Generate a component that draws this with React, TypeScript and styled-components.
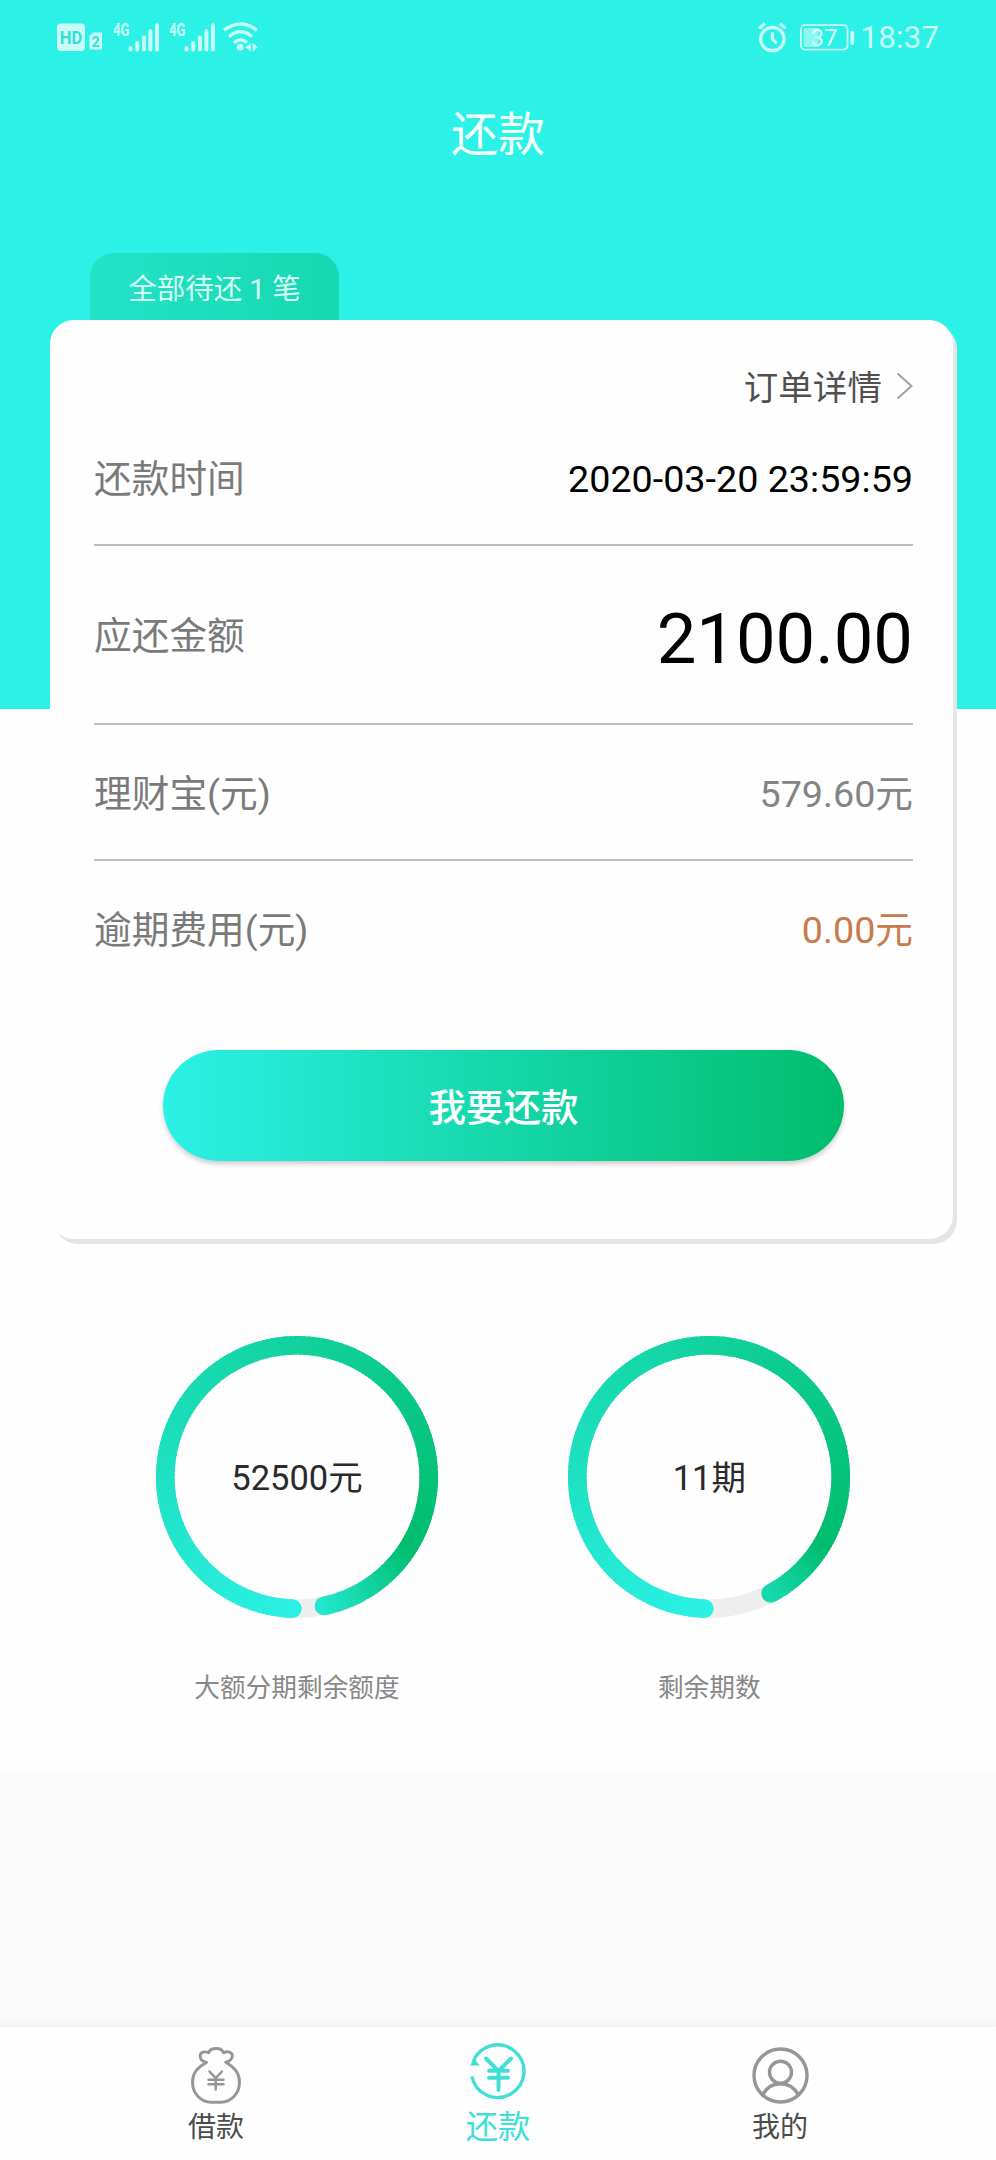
import React from "react";
import styled, { createGlobalStyle } from "styled-components";

const CYAN = "#2bf1e6";
const STATUS = "#c9fcf8";

const GlobalStyle = createGlobalStyle`
  * { box-sizing: border-box; }
  body {
    margin: 0;
    background: #fafafa;
    font-family: Roboto, "Noto Sans CJK SC", sans-serif;
  }
`;

const Page = styled.div`
  display: flex;
  flex-direction: column;
  width: 996px;
  height: 2160px;
  background: #fafafa;
`;

const Main = styled.main`
  height: 1773px;
  background: linear-gradient(${CYAN} 0 709px, #fefefe 709px);
`;

const StatusBar = styled.div`
  display: flex;
  justify-content: space-between;
  align-items: center;
  height: 74px;
  padding: 0 57px;
  color: ${STATUS};
`;

const StatusGroup = styled.div`
  display: flex;
  align-items: center;
  svg { display: block; overflow: visible; }
`;

const StatusItem = styled.span<{ $gap: number }>`
  margin-left: ${(p) => p.$gap}px;
`;

const Clock = styled.span`
  margin-left: 6px;
  font-size: 31.5px;
  line-height: 40px;
  padding-top: 2px;
`;

const TitleBar = styled.h1`
  display: flex;
  justify-content: center;
  align-items: center;
  height: 120px;
  margin: 0;
  color: #f2fffe;
  font-size: 47px;
  font-weight: 400;
  line-height: 60px;
  padding-top: 2px;
`;

const PendingTab = styled.div`
  display: flex;
  justify-content: center;
  align-items: center;
  width: 249px;
  height: 67px;
  margin: 59px 0 0 90px;
  border-radius: 24px 24px 0 0;
  background: linear-gradient(90deg, #24e2c8, #17d8b0);
  color: #d8fff6;
  font-size: 28.5px;
  line-height: 36px;
  padding-top: 6px;
`;

const Card = styled.section`
  height: 919px;
  width: 903px;
  margin-left: 50px;
  padding: 48px 40px 0 44px;
  border-radius: 24px;
  background: #fefefe;
  box-shadow: 4px 5px 0 #e5e5e5;
`;

const OrderLink = styled.div`
  display: flex;
  justify-content: flex-end;
  align-items: center;
  gap: 14px;
  height: 40px;
  margin-bottom: 3px;
  color: #505050;
  font-size: 34.6px;
  line-height: 40px;
  svg { margin-top: -4px; }
`;

const Row = styled.div<{ $height: number; $last?: boolean }>`
  display: flex;
  justify-content: space-between;
  align-items: center;
  height: ${(p) => p.$height}px;
  border-bottom: ${(p) => (p.$last ? 0 : 2)}px solid #bcbcbc;
  font-size: 37.7px;
  line-height: 48px;
`;

const RowLabel = styled.span`
  padding-top: 3px;
  color: #7a7a7a;
`;

const RowValue = styled.span<{ $color?: string; $size?: number; $drop?: number }>`
  padding-top: ${(p) => p.$drop ?? 3}px;
  color: ${(p) => p.$color ?? "#000"};
  font-size: ${(p) => p.$size ?? 37.7}px;
`;

const PayButton = styled.button`
  display: flex;
  justify-content: center;
  align-items: center;
  width: 681px;
  height: 111px;
  margin: 55px 0 0 69px;
  padding: 5px 0 0;
  border: 0;
  border-radius: 56px;
  background: linear-gradient(90deg, ${CYAN}, #00bd6d);
  box-shadow: 0 3px 5px rgba(0, 0, 0, 0.2);
  color: #fff;
  font: 500 37.5px/48px Roboto, "Noto Sans CJK SC", sans-serif;
`;

const Gauges = styled.section`
  display: flex;
  gap: 130.3px;
  padding: 97px 0 0 156px;
`;

const Gauge = styled.div`
  display: flex;
  flex-direction: column;
  align-items: center;
  width: 282px;
`;

const RingBox = styled.div`
  display: grid;
  place-items: center;
  > * { grid-area: 1 / 1; }
  svg { display: block; }
`;

const RingValue = styled.span`
  padding-top: 1px;
  color: #2a2a2a;
  font-size: 34.5px;
  line-height: 44px;
`;

const GaugeLabel = styled.span`
  margin-top: 52px;
  color: #888;
  font-size: 25.7px;
  line-height: 36px;
`;

const NavBar = styled.nav`
  display: flex;
  height: 133px;
  margin-top: auto;
  padding: 0 75px;
  background: #fefefe;
  box-shadow: 0 -2px 8px rgba(0, 0, 0, 0.05);
`;

const NavItem = styled.div<{ $active?: boolean }>`
  display: flex;
  flex: 1;
  flex-direction: column;
  align-items: center;
  padding-top: ${(p) => (p.$active ? 15 : 20)}px;
  color: ${(p) => (p.$active ? "#3fdfd6" : "#969696")};
  svg { display: block; }
`;

const NavLabel = styled.span<{ $active?: boolean }>`
  margin-top: ${(p) => (p.$active ? 9 : 6)}px;
  color: ${(p) => (p.$active ? "#3fdfd6" : "#4c4c4c")};
  font-size: ${(p) => (p.$active ? 32.3 : 28)}px;
  line-height: 36px;
`;

const HdIcon = () => (
  <svg width="45" height="30" viewBox="0 0 45 30">
    <rect x="0" y="1.5" width="28" height="27.5" rx="4" fill={STATUS} />
    <text x="14" y="21.8" textAnchor="middle" fontSize="18.5" fontWeight="700" textLength="22.5" lengthAdjust="spacingAndGlyphs" fill="#35dfd8" fontFamily="Roboto">HD</text>
    <path d="M36 10.5h9v17H32.5V14z" fill={STATUS} />
    <text x="38.7" y="24.5" textAnchor="middle" fontSize="14.5" fontWeight="700" fill="#35dfd8" fontFamily="Roboto">2</text>
  </svg>
);

const SignalIcon = () => (
  <svg width="46" height="32" viewBox="0 -2 46 32">
    <text x="0" y="12.8" fontSize="18" fontWeight="700" textLength="16.5" lengthAdjust="spacingAndGlyphs" fill={STATUS} fontFamily="Roboto">4G</text>
    <path
      d="M17.5 25v1.5M24.2 20v6.5M31 14.2v12.3M37.4 8.2v18.3M44 2.2v24.3"
      stroke={STATUS}
      strokeWidth="4"
      strokeLinecap="round"
    />
  </svg>
);

const WifiIcon = () => (
  <svg width="35" height="30" viewBox="0 0 35 30" fill="none" stroke={STATUS} strokeWidth="3.4">
    <path d="M1 8.2Q17.5-4.2 34 8.2M6 14.6Q17.5 5 29 14.6M11 20.8Q17.5 14.8 24 20.8" />
    <circle cx="17.2" cy="25.2" r="3.4" fill={STATUS} stroke="none" />
    <path d="M27.8 21v8.4L22.5 25.2zM29.6 21v8.4L35 25.2z" fill={STATUS} stroke="none" />
  </svg>
);

const AlarmIcon = () => (
  <svg width="29" height="30" viewBox="0 0 29 30" fill="none" stroke={STATUS} strokeWidth="3.2">
    <circle cx="14.4" cy="17" r="11.7" />
    <path d="M14.4 10.3v7l4.4 3.8M1.2 6.4l5.6-4.8M27.6 6.4L22 1.6" />
  </svg>
);

const BatteryIcon = () => (
  <svg width="55" height="30" viewBox="0 0 55 30">
    <rect x="1" y="3.2" width="46.5" height="24.4" rx="4" fill="none" stroke={STATUS} strokeWidth="1.8" />
    <rect x="3.6" y="6" width="15" height="19" rx="1" fill={STATUS} opacity="0.6" />
    <rect x="50.4" y="8.5" width="3.8" height="14.5" rx="1.9" fill={STATUS} />
    <text x="24" y="24" textAnchor="middle" fontSize="24" fill="#dffefb" fontFamily="Roboto">37</text>
  </svg>
);

const BagIcon = () => (
  <svg width="50" height="57" viewBox="0 0 50 57" fill="none" stroke="currentColor" strokeWidth="2.9" strokeLinejoin="round" strokeLinecap="round">
    <path d="M15.5 15.5C12 14.5 8.8 12 9.2 8.6C9.6 5.3 13.5 3.7 17.5 5.8C18.5 3.2 22 1.5 25.3 1.5C28.6 1.5 31.500 3.2 32.6 5.8C36.5 3.7 41 5.2 41.4 8.6C41.8 12 38 14.8 34.7 15.3C42.5 19.5 48.5 26.5 48.5 35C48.5 47.5 39 55.3 30 55.3H20C11 55.3 1.5 47.5 1.5 35C1.5 26.5 7.5 19.5 15.5 15.5Z" />
    <path d="M18.5 24.5l6.2 6.7 6.2-6.7M24.7 31v11.5M17.5 32.7h15M17.5 37.3h15" strokeWidth="2.5" />
  </svg>
);

const RepayIcon = () => (
  <svg width="58" height="58" viewBox="0 0 58 58" fill="none" stroke="currentColor" strokeWidth="3.4">
    <path d="M4.2 19.5A26.3 26.3 0 1 1 2.9 34.5" />
    <path d="M1.2 23.5H11L4.8 16.5z" fill="currentColor" stroke="none" />
    <path d="M17 16.5l12.5 12.3L42 16.5M29.5 28.5v19.5M20 28.8h19M20 35.8h19" strokeWidth="3.9" strokeLinecap="round" />
  </svg>
);

const UserIcon = () => (
  <svg width="57" height="57" viewBox="0 0 57 57" fill="none" stroke="currentColor" strokeWidth="3.4">
    <circle cx="28.5" cy="28.5" r="26.5" />
    <circle cx="28.5" cy="25.2" r="11" />
    <path d="M10.5 48C14.5 40.5 20.5 36.7 28.5 36.7S42.5 40.5 46.5 48" />
  </svg>
);

const START = 92;
const PEAK = 300;
const R = 131.7;
const C = 141;

const point = (deg: number) => {
  const a = (deg * Math.PI) / 180;
  return [C + R * Math.cos(a), C + R * Math.sin(a)];
};

// Sweeps cyan to green over 300 degrees, then back towards cyan.
const sweepColor = (deg: number) => {
  const s = Math.max(0, deg - 90);
  const t = s <= PEAK ? s / PEAK : (360 - s) / (360 - PEAK);
  const mix = (a: number, b: number) => Math.round(a + (b - a) * t);
  return `rgb(${mix(43, 0)},${mix(241, 189)},${mix(230, 109)})`;
};

const Ring = ({ end }: { end: number }) => {
  const steps = 180;
  const step = (end - START) / steps;
  const [sx, sy] = point(START);
  const [ex, ey] = point(end);
  return (
    <svg width="282" height="282" viewBox="0 0 282 282">
      <circle cx={C} cy={C} r={R} fill="none" stroke="#eee" strokeWidth="18.6" />
      <circle cx={sx} cy={sy} r="9.3" fill={sweepColor(START)} />
      <circle cx={ex} cy={ey} r="9.3" fill={sweepColor(end)} />
      {Array.from({ length: steps }, (_, i) => {
        const a = START + i * step;
        const b = Math.min(end, a + step * 1.5);
        const [x1, y1] = point(a);
        const [x2, y2] = point(b);
        return <path key={i} d={`M${x1} ${y1}A${R} ${R} 0 0 1 ${x2} ${y2}`} fill="none" stroke={sweepColor(a)} strokeWidth="18.6" />;
      })}
    </svg>
  );
};

const gauges = [
  { value: "52500元", label: "大额分期剩余额度", end: 438.2 },
  { value: "11期", label: "剩余期数", end: 422.1 },
];

export default function App() {
  return (
    <Page>
      <GlobalStyle />
      <Main>
        <StatusBar>
          <StatusGroup>
            <HdIcon />
            <StatusItem $gap={11}><SignalIcon /></StatusItem>
            <StatusItem $gap={10}><SignalIcon /></StatusItem>
            <StatusItem $gap={8}><WifiIcon /></StatusItem>
          </StatusGroup>
          <StatusGroup>
            <AlarmIcon />
            <StatusItem $gap={13}><BatteryIcon /></StatusItem>
            <Clock>18:37</Clock>
          </StatusGroup>
        </StatusBar>
        <TitleBar>还款</TitleBar>
        <PendingTab>全部待还 1 笔</PendingTab>
        <Card>
          <OrderLink>
            订单详情
            <svg width="17" height="28" viewBox="0 0 17 28" fill="none" stroke="#a0a0a0" strokeWidth="2">
              <path d="M1.5 1.5L15.5 14 1.5 26.5" />
            </svg>
          </OrderLink>
          <Row $height={135}>
            <RowLabel>还款时间</RowLabel>
            <RowValue>2020-03-20 23:59:59</RowValue>
          </Row>
          <Row $height={179}>
            <RowLabel>应还金额</RowLabel>
            <RowValue $size={70.5} $drop={8}>2100.00</RowValue>
          </Row>
          <Row $height={136}>
            <RowLabel>理财宝(元)</RowLabel>
            <RowValue $color="#848484">579.60元</RowValue>
          </Row>
          <Row $height={134} $last>
            <RowLabel>逾期费用(元)</RowLabel>
            <RowValue $color="#c87a4c">0.00元</RowValue>
          </Row>
          <PayButton>我要还款</PayButton>
        </Card>
        <Gauges>
          {gauges.map((g) => (
            <Gauge key={g.label}>
              <RingBox>
                <Ring end={g.end} />
                <RingValue>{g.value}</RingValue>
              </RingBox>
              <GaugeLabel>{g.label}</GaugeLabel>
            </Gauge>
          ))}
        </Gauges>
      </Main>
      <NavBar>
        <NavItem>
          <BagIcon />
          <NavLabel>借款</NavLabel>
        </NavItem>
        <NavItem $active>
          <RepayIcon />
          <NavLabel $active>还款</NavLabel>
        </NavItem>
        <NavItem>
          <UserIcon />
          <NavLabel>我的</NavLabel>
        </NavItem>
      </NavBar>
    </Page>
  );
}
